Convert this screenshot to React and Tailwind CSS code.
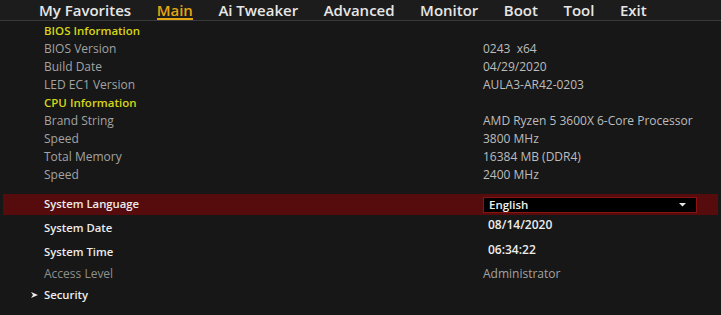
import React from 'react';

const tabs = ['My Favorites', 'Main', 'Ai Tweaker', 'Advanced', 'Monitor', 'Boot', 'Tool', 'Exit'];

const infoRows = [
  { label: 'BIOS Information', heading: true },
  { label: 'BIOS Version', value: '0243  x64' },
  { label: 'Build Date', value: '04/29/2020' },
  { label: 'LED EC1 Version', value: 'AULA3-AR42-0203' },
  { label: 'CPU Information', heading: true },
  { label: 'Brand String', value: 'AMD Ryzen 5 3600X 6-Core Processor' },
  { label: 'Speed', value: '3800 MHz' },
  { label: 'Total Memory', value: '16384 MB (DDR4)' },
  { label: 'Speed', value: '2400 MHz' },
];

const InfoRow = ({ label, value, heading }) => (
  <div className="flex h-[18px] items-center">
    <div
      className={`w-[483px] pl-[44px] ${
        heading ? 'text-[#d6d616] font-semibold text-[11.5px]' : 'text-[#a3a3a3]'
      }`}
    >
      {label}
    </div>
    {value && <div className="text-[#bdbdbd] whitespace-pre">{value}</div>}
  </div>
);

export default function App() {
  return (
    <div
      className="w-[721px] h-[315px] overflow-hidden bg-[#171717] text-[12px]"
      style={{ fontFamily: '"Open Sans", "Noto Sans", sans-serif' }}
    >
      <div className="h-[21px] bg-[#1c1c1c] border-b border-[#3a3a3a] flex items-center pl-[39px] gap-[25.5px] text-[15px] font-semibold leading-none">
        {tabs.map((t) => (
          <div
            key={t}
            className={`relative ${t === 'Main' ? 'text-[#e5a50f]' : 'text-[#e6e6e6]'}`}
          >
            {t}
            {t === 'Main' && (
              <div className="absolute left-0 right-0 top-[15px] h-[2px] bg-[#e5a50f]" />
            )}
          </div>
        ))}
      </div>

      <div className="pt-[1px]">
        {infoRows.map((r, i) => (
          <InfoRow key={i} {...r} />
        ))}
      </div>

      <div className="mt-[10px] h-[21px] mx-[3px] bg-[#560c0c] flex items-center">
        <div className="w-[480px] pl-[41px] text-[#ececec] font-semibold text-[11.3px]">System Language</div>
        <div className="w-[214px] h-[16px] bg-black border border-[#8a1414] flex items-center justify-between pl-[5px] pr-[10px]">
          <span className="text-[#f0f0f0] font-semibold text-[11.5px]">English</span>
          <svg width="7" height="4" viewBox="0 0 7 4">
            <path d="M0 0 L7 0 L3.5 3.5 Z" fill="#e6e6e6" />
          </svg>
        </div>
      </div>

      <div className="flex h-[26px] items-center">
        <div className="w-[444px] pl-[44px] text-[#ececec] font-semibold text-[11.3px]">System Date</div>
        <div className="pl-[44px] pb-[6px] text-[#ececec] font-semibold">08/14/2020</div>
      </div>
      <div className="flex h-[22px] items-center">
        <div className="w-[444px] pl-[44px] text-[#ececec] font-semibold text-[11.3px]">System Time</div>
        <div className="pl-[44px] pb-[4px] text-[#ececec] font-semibold">06:34:22</div>
      </div>
      <div className="flex h-[22px] items-center">
        <div className="w-[483px] pl-[44px] text-[#8f8f8f]">Access Level</div>
        <div className="text-[#a3a3a3]">Administrator</div>
      </div>
      <div className="flex h-[20px] items-center">
        <div className="pl-[31px] flex items-center gap-[6px] text-[#ececec] font-semibold text-[11.3px]">
          <svg width="7" height="6" viewBox="0 0 7 6">
            <path d="M0 0 L7 3 L0 6 L2 3 Z" fill="#ececec" />
          </svg>
          Security
        </div>
      </div>
    </div>
  );
}
